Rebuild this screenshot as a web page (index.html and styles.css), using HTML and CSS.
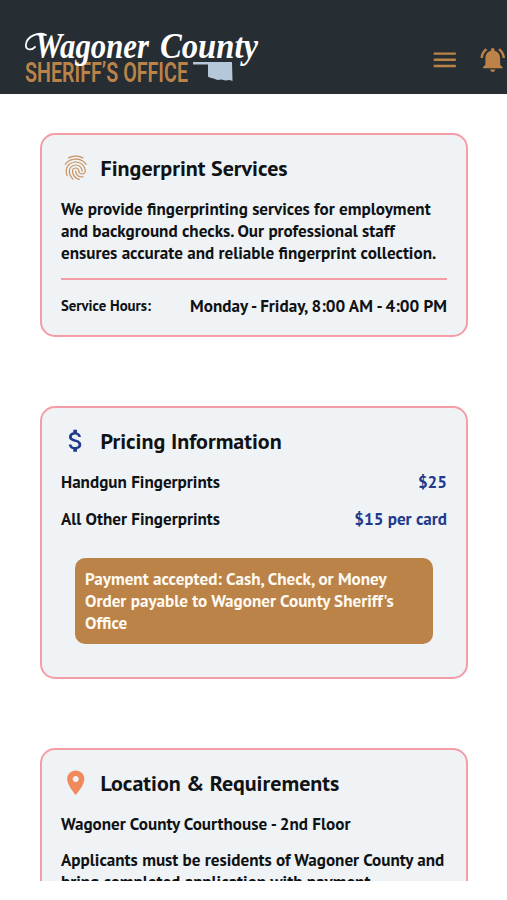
FILE: index.html
```
<!DOCTYPE html>
<html lang="en">
<head>
  <meta charset="UTF-8">
  <meta name="viewport" content="width=device-width, initial-scale=1.0">
  <title>Fingerprint Services - Wagoner County Sheriff's Office</title>
  <link rel="stylesheet" href="styles.css">
</head>
<body>
  <header class="site-header">
    <svg class="logo" width="242" height="60" viewBox="0 0 242 60" role="img" aria-label="Wagoner County Sheriff's Office">
      <text class="logo-office" x="4" y="52.5" textLength="163" lengthAdjust="spacingAndGlyphs">SHERIFF’S OFFICE</text>
      <path class="logo-state" d="M172 33h39l.5 19-3-1-4 .5-4-1-4 .5-4-1.500-4-1-1.500-1V35.500h-15z"/>
      <path class="logo-swash" d="M25 6C17 2 6 8 5 15c-1 6 5 7 9 3"/>
      <text class="logo-county" x="14" y="28.500" textLength="114" lengthAdjust="spacingAndGlyphs">Wagoner</text>
      <text class="logo-county" x="139" y="28.500" textLength="98" lengthAdjust="spacingAndGlyphs">County</text>
    </svg>
    <nav class="header-actions">
      <svg class="action-icon" viewBox="0 0 24 24"><path d="M3 18h18v-2H3v2zm0-5h18v-2H3v2zm0-7v2h18V6H3z"/></svg>
      <svg class="action-icon" viewBox="0 0 24 24"><path d="M7.58 4.08L6.15 2.65C3.75 4.48 2.17 7.3 2.03 10.5h2c.15-2.65 1.51-4.97 3.55-6.42zm12.39 6.42h2c-.15-3.2-1.73-6.02-4.12-7.85l-1.42 1.43c2.02 1.45 3.39 3.77 3.54 6.42zM18 11c0-3.07-1.64-5.64-4.5-6.32V4c0-.83-.67-1.5-1.5-1.5s-1.5.67-1.5 1.5v.68C7.63 5.36 6 7.92 6 11v5l-2 2v1h16v-1l-2-2v-5zm-6 11c1.1 0 2-.9 2-2h-4c0 1.1.9 2 2 2z"/></svg>
    </nav>
  </header>

  <main class="content">
    <section class="card services">
      <div class="card-header">
        <svg class="card-icon icon-print" viewBox="0 0 24 24"><path d="M17.81 4.47c-.08 0-.16-.02-.23-.06C15.66 3.42 14 3 12.01 3c-1.98 0-3.86.47-5.57 1.41-.24.13-.54.04-.68-.2-.13-.24-.04-.55.2-.68C7.82 2.52 9.86 2 12.01 2c2.13 0 3.99.47 6.03 1.52.25.13.34.43.21.67-.09.18-.26.28-.44.28zM3.5 9.72c-.1 0-.2-.03-.29-.09-.23-.16-.28-.47-.12-.7.99-1.4 2.25-2.5 3.75-3.27C9.98 4.04 14 4.03 17.15 5.65c1.5.77 2.76 1.86 3.75 3.25.16.22.11.54-.12.7-.23.16-.54.11-.7-.12-.9-1.26-2.04-2.25-3.39-2.94-2.87-1.47-6.54-1.47-9.4.01-1.36.7-2.5 1.7-3.4 2.96-.08.14-.23.21-.39.21zm6.25 12.07c-.13 0-.26-.05-.35-.15-.87-.87-1.34-1.43-2.01-2.64-.69-1.23-1.05-2.73-1.05-4.34 0-2.97 2.54-5.39 5.66-5.39s5.66 2.42 5.66 5.39c0 .28-.22.5-.5.5s-.5-.22-.5-.5c0-2.42-2.09-4.39-4.66-4.39-2.57 0-4.66 1.97-4.66 4.39 0 1.44.32 2.77.93 3.85.64 1.15 1.08 1.64 1.85 2.42.19.2.19.51 0 .71-.11.1-.24.15-.37.15zm7.17-1.85c-1.19 0-2.24-.3-3.1-.89-1.49-1.01-2.38-2.65-2.38-4.39 0-.28.22-.5.5-.5s.5.22.5.5c0 1.41.72 2.74 1.94 3.56.71.48 1.54.71 2.54.71.24 0 .64-.03 1.04-.1.27-.05.53.13.58.41.05.27-.13.53-.41.58-.57.11-1.07.12-1.21.12zM14.91 22c-.04 0-.09-.01-.13-.02-1.59-.44-2.63-1.03-3.72-2.1-1.4-1.39-2.17-3.24-2.17-5.22 0-1.62 1.38-2.94 3.08-2.94 1.7 0 3.08 1.32 3.08 2.94 0 1.07.93 1.94 2.08 1.94s2.08-.87 2.08-1.94c0-3.77-3.25-6.83-7.25-6.83-2.84 0-5.44 1.58-6.61 4.03-.39.81-.59 1.76-.59 2.8 0 .78.07 2.01.67 3.61.1.26-.03.55-.29.64-.26.1-.55-.04-.64-.29-.49-1.31-.73-2.61-.73-3.96 0-1.2.23-2.29.68-3.24 1.33-2.79 4.28-4.6 7.51-4.6 4.55 0 8.25 3.51 8.25 7.83 0 1.62-1.38 2.94-3.08 2.94s-3.08-1.32-3.08-2.94c0-1.07-.93-1.94-2.08-1.94s-2.08.87-2.08 1.94c0 1.71.66 3.31 1.87 4.51.95.94 1.86 1.46 3.27 1.85.27.07.42.35.35.61-.05.23-.26.38-.47.38z"/></svg>
        <h2>Fingerprint Services</h2>
      </div>
      <p>We provide fingerprinting services for employment<br>and background checks. Our professional staff<br>ensures accurate and reliable fingerprint collection.</p>
      <div class="row hours">
        <span class="label">Service Hours:</span>
        <span>Monday - Friday, 8:00 AM - 4:00 PM</span>
      </div>
    </section>

    <section class="card pricing">
      <div class="card-header">
        <svg class="card-icon icon-dollar" viewBox="0 0 24 24"><path d="M11.8 10.9c-2.27-.59-3-1.2-3-2.15 0-1.09 1.01-1.85 2.7-1.85 1.78 0 2.44.85 2.5 2.1h2.21c-.07-1.72-1.12-3.3-3.21-3.81V3h-3v2.16c-1.94.42-3.5 1.68-3.5 3.61 0 2.31 1.91 3.46 4.7 4.13 2.5.6 3 1.48 3 2.41 0 .69-.49 1.79-2.7 1.79-2.06 0-2.87-.92-2.98-2.1h-2.2c.12 2.19 1.76 3.42 3.68 3.83V21h3v-2.15c1.95-.37 3.5-1.5 3.5-3.55 0-2.84-2.43-3.81-4.7-4.4z"/></svg>
        <h2>Pricing Information</h2>
      </div>
      <div class="row">
        <span>Handgun Fingerprints</span>
        <span class="price">$25</span>
      </div>
      <div class="row">
        <span>All Other Fingerprints</span>
        <span class="price">$15 per card</span>
      </div>
      <div class="notice">Payment accepted: Cash, Check, or Money<br>Order payable to Wagoner County Sheriff's<br>Office</div>
    </section>

    <section class="card location">
      <div class="card-header">
        <svg class="card-icon icon-pin" viewBox="0 0 24 24"><path d="M12 2C8.13 2 5 5.13 5 9c0 5.25 7 13 7 13s7-7.75 7-13c0-3.87-3.13-7-7-7zm0 9.5c-1.38 0-2.5-1.12-2.5-2.5s1.12-2.5 2.5-2.5 2.5 1.12 2.5 2.5-1.12 2.5-2.5 2.5z"/></svg>
        <h2>Location &amp; Requirements</h2>
      </div>
      <p class="address">Wagoner County Courthouse - 2nd Floor</p>
      <p>Applicants must be residents of Wagoner County and<br>bring completed application with payment.</p>
    </section>
  </main>
</body>
</html>
```
FILE: styles.css
```
* {
  box-sizing: border-box;
}

body {
  margin: 0;
  height: 900px;
  overflow: hidden;
  background: #fff;
  color: #101214;
  font-family: "PT Sans", "Open Sans", "Noto Sans", sans-serif;
  font-size: 17.1px;
  font-weight: 700;
  font-stretch: 85%;
  line-height: 22px;
}

.site-header {
  display: flex;
  justify-content: space-between;
  height: 94px;
  padding: 29px 0 0 21px;
  background: #262d33;
  overflow: hidden;
}

.logo {
  overflow: visible;
}

.logo-county {
  fill: #fff;
  font: italic 700 35px "Liberation Serif", serif;
}

.logo-swash {
  fill: none;
  stroke: #fff;
  stroke-width: 1.8;
  stroke-linecap: round;
}

.logo-office {
  fill: #bb8348;
  font: 600 27px Roboto, sans-serif;
}

.logo-state {
  fill: #b5c8da;
}

.header-actions {
  display: flex;
  gap: 18px;
  padding-top: 15.5px;
}

.action-icon {
  width: 29.5px;
  height: 29.5px;
  fill: #bb8348;
}

.action-icon:first-child {
  margin-left: -1px;
}

.content {
  display: flex;
  flex-direction: column;
  gap: 69px;
  height: 787px;
  padding: 39px 39px 0 40px;
  overflow: hidden;
}

.card {
  flex: none;
  padding: 18px 19px;
  background: #eff3f6;
  border: 2px solid #f49da6;
  border-radius: 15px;
}

.services {
  height: 204px;
}

.pricing {
  height: 273px;
}

.card-header {
  display: flex;
  align-items: center;
  gap: 10px;
  height: 30px;
  margin-bottom: 15px;
}

.card-icon {
  width: 29.5px;
  height: 29.5px;
}

.icon-print {
  fill: #c99260;
}

.icon-dollar {
  fill: #1e3a8a;
}

.icon-pin {
  fill: #f08a5b;
}

h2 {
  margin: 0;
  font-size: 22px;
  font-weight: 700;
}

p {
  margin: 0;
}

.row {
  display: flex;
  justify-content: space-between;
  align-items: center;
  margin-bottom: 15px;
}

.hours {
  margin-top: 14px;
  padding-top: 15px;
  border-top: 2px solid #f49da6;
}

.label {
  font-size: 14.8px;
}

.price {
  color: #233a8b;
}

.notice {
  height: 86px;
  margin: 28px 14px 0;
  padding: 10px;
  background: #bb8348;
  border-radius: 10px;
  color: #fffaf2;
}

.address {
  margin-bottom: 14px;
}
```
